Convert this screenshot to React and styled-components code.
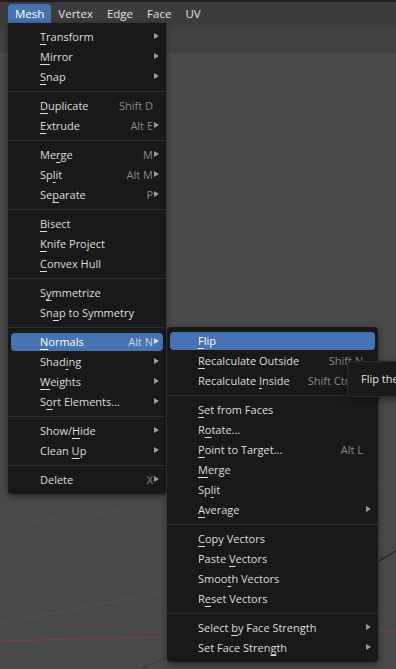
import React from 'react'
import styled, { createGlobalStyle } from 'styled-components'

const GlobalStyle = createGlobalStyle`
  body {
    margin: 0;
    background: #494949;
    font-family: "Open Sans", "DejaVu Sans", sans-serif;
  }
`

const Screen = styled.div`
  position: relative;
  width: 396px;
  height: 669px;
  overflow: hidden;
  display: flex;
  flex-direction: column;
  background: #494949;
  font-size: 11px;
`

const TopStrip = styled.div`
  height: 2px;
  background: #1e1e1e;
`

const Header = styled.div`
  height: 25px;
  box-sizing: border-box;
  padding: 2px 0 0 8px;
  display: flex;
  background: #3c3c3c;
`

const HeaderItem = styled.div`
  height: 19px;
  padding: 0 7px;
  display: flex;
  align-items: center;
  color: ${p => (p.$open ? '#ffffff' : '#e3e3e3')};
  background: ${p => (p.$open ? '#4772b3' : 'transparent')};
  border-radius: 4px 4px 0 0;
  font-size: 11.5px;
`

const ToolBand = styled.div`
  height: 26px;
  background: #424242;
`

const Viewport = styled.div`
  position: relative;
  flex: 1;
  background: #494949;
`

const Lines = styled.svg`
  position: absolute;
  inset: 0;
`

const Menu = styled.div`
  position: absolute;
  left: ${p => p.$x}px;
  top: ${p => p.$y}px;
  width: ${p => p.$w}px;
  padding: 4px 0;
  background: #191919;
  border-radius: ${p => (p.$sub ? '4px' : '0 0 4px 4px')};
  box-shadow: 0 2px 6px rgba(0, 0, 0, 0.45);
`

const Separator = styled.div`
  height: 9px;
  display: flex;
  align-items: center;
  &::after {
    content: '';
    flex: 1;
    height: 1px;
    background: #2d2d2d;
  }
`

const Row = styled.div`
  height: 20px;
  padding: 1px 3px;
  box-sizing: border-box;
`

const Pill = styled.div`
  height: 18px;
  box-sizing: border-box;
  display: flex;
  align-items: center;
  padding: 0 4px 2px ${p => p.$indent}px;
  border-radius: 4px;
  background: ${p => (p.$active ? '#4772b3' : 'transparent')};
  color: ${p => (p.$active ? '#ffffff' : '#dedede')};
`

const Label = styled.span`
  flex: 1;
  white-space: nowrap;
  & u {
    text-decoration: underline;
    text-underline-offset: 3px;
    text-decoration-thickness: 1px;
  }
`

const Shortcut = styled.span`
  white-space: nowrap;
  color: ${p => (p.$active ? '#c9d3e4' : '#8a8a8a')};
`

const Arrow = styled.span`
  width: 5px;
  height: 0;
  margin-left: ${p => p.$gap}px;
  border-left: 5px solid ${p => (p.$show ? (p.$active ? '#d6def0' : '#9c9c9c') : 'transparent')};
  border-top: 3.5px solid transparent;
  border-bottom: 3.5px solid transparent;
  box-sizing: border-box;
`

const Tooltip = styled.div`
  position: absolute;
  left: 347px;
  top: 361px;
  height: 36px;
  box-sizing: border-box;
  padding: 0 13px 1px;
  display: flex;
  align-items: center;
  white-space: nowrap;
  background: #1a1a1a;
  border: 1px solid #2c2c2c;
  border-radius: 4px;
  color: #e4e4e4;
  box-shadow: 0 2px 6px rgba(0, 0, 0, 0.45);
`

const mainMenu = [
  [
    { t: 'Transform', u: 0, arrow: true },
    { t: 'Mirror', u: 0, arrow: true },
    { t: 'Snap', u: 0, arrow: true },
  ],
  [
    { t: 'Duplicate', u: 0, k: 'Shift D' },
    { t: 'Extrude', u: 0, k: 'Alt E', arrow: true },
  ],
  [
    { t: 'Merge', u: 2, k: 'M', arrow: true },
    { t: 'Split', u: 2, k: 'Alt M', arrow: true },
    { t: 'Separate', u: 2, k: 'P', arrow: true },
  ],
  [
    { t: 'Bisect', u: 0 },
    { t: 'Knife Project', u: 0 },
    { t: 'Convex Hull', u: 0 },
  ],
  [
    { t: 'Symmetrize', u: 1 },
    { t: 'Snap to Symmetry', u: 2 },
  ],
  [
    { t: 'Normals', u: 0, k: 'Alt N', arrow: true, active: true },
    { t: 'Shading', u: 4, arrow: true },
    { t: 'Weights', u: 0, arrow: true },
    { t: 'Sort Elements...', u: 1, arrow: true },
  ],
  [
    { t: 'Show/Hide', u: 5, arrow: true },
    { t: 'Clean Up', u: 6, arrow: true },
  ],
  [{ t: 'Delete', u: -1, k: 'X', arrow: true }],
]

const normalsMenu = [
  [
    { t: 'Flip', u: 0, active: true },
    { t: 'Recalculate Outside', u: 0, k: 'Shift N' },
    { t: 'Recalculate Inside', u: 12, k: 'Shift Ctrl N' },
  ],
  [
    { t: 'Set from Faces', u: 0 },
    { t: 'Rotate...', u: 1 },
    { t: 'Point to Target...', u: 0, k: 'Alt L' },
    { t: 'Merge', u: 0 },
    { t: 'Split', u: 2 },
    { t: 'Average', u: 0, arrow: true },
  ],
  [
    { t: 'Copy Vectors', u: 0 },
    { t: 'Paste Vectors', u: 6 },
    { t: 'Smooth Vectors', u: 4 },
    { t: 'Reset Vectors', u: 1 },
  ],
  [
    { t: 'Select by Face Strength', u: 7, arrow: true },
    { t: 'Set Face Strength', u: 14, arrow: true },
  ],
]

function Mnemonic({ text, at }) {
  if (at < 0) return text
  return (
    <>
      {text.slice(0, at)}
      <u>{text[at]}</u>
      {text.slice(at + 1)}
    </>
  )
}

function MenuList({ sections, x, y, w, sub, indent, gap }) {
  return (
    <Menu $x={x} $y={y} $w={w} $sub={sub}>
      {sections.map((items, i) => (
        <React.Fragment key={i}>
          {i > 0 && <Separator />}
          {items.map(item => (
            <Row key={item.t}>
              <Pill $active={item.active} $indent={indent}>
                <Label>
                  <Mnemonic text={item.t} at={item.u} />
                </Label>
                {item.k && <Shortcut $active={item.active}>{item.k}</Shortcut>}
                <Arrow $show={item.arrow} $active={item.active} $gap={gap} />
              </Pill>
            </Row>
          ))}
        </React.Fragment>
      ))}
    </Menu>
  )
}

export default function App() {
  return (
    <Screen>
      <GlobalStyle />
      <TopStrip />
      <Header>
        <HeaderItem $open>Mesh</HeaderItem>
        <HeaderItem>Vertex</HeaderItem>
        <HeaderItem>Edge</HeaderItem>
        <HeaderItem>Face</HeaderItem>
        <HeaderItem>UV</HeaderItem>
      </Header>
      <ToolBand />
      <Viewport>
        <Lines width="396" height="616" viewBox="0 0 396 616">
          <path d="M0 472 L170 452 L396 430" stroke="#505050" strokeWidth="1" fill="none" />
          <path d="M0 520 L200 500 L396 482" stroke="#4e4e4e" strokeWidth="1" fill="none" />
          <path d="M0 570 L160 540" stroke="#525252" strokeWidth="1" fill="none" />
          <path d="M0 610 L170 596" stroke="#4f4f4f" strokeWidth="1" fill="none" />
          <path d="M0 588 L396 578" stroke="#8a3a48" strokeWidth="1" fill="none" />
          <path d="M340 530 L396 498" stroke="#1e1e1e" strokeWidth="1" fill="none" />
          <path d="M140 616 L200 590" stroke="#3a3a3a" strokeWidth="1" fill="none" />
        </Lines>
      </Viewport>
      <MenuList sections={mainMenu} x={8} y={23} w={158} indent={29} gap={1} />
      <MenuList sections={normalsMenu} x={167} y={327} w={211} sub indent={28} gap={3} />
      <Tooltip>Flip the direction of selected faces&apos; vertex and face normals</Tooltip>
    </Screen>
  )
}
